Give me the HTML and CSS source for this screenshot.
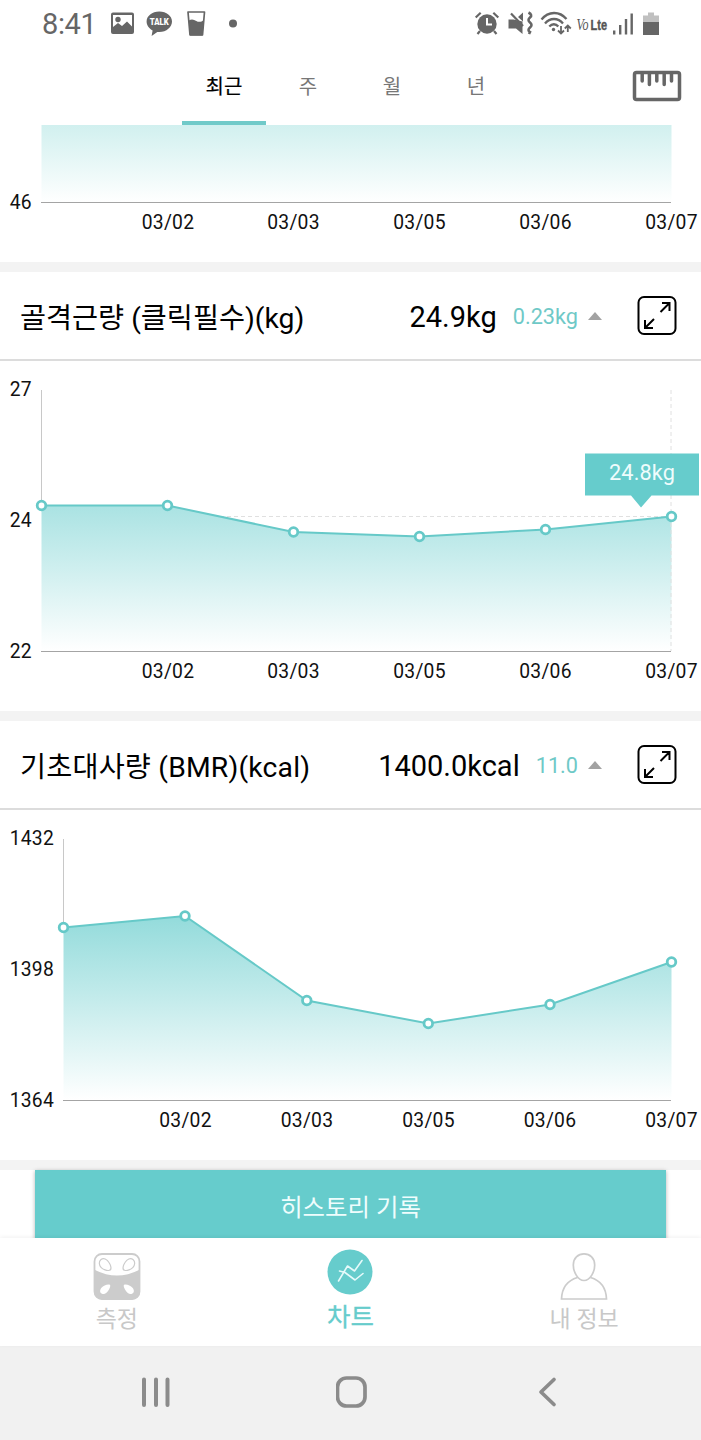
FILE: index.html
```html
<!DOCTYPE html>
<html lang="ko">
<head>
<meta charset="utf-8">
<title>차트</title>
<link rel="stylesheet" href="styles.css">
</head>
<body>
<svg class="defs" width="0" height="0" aria-hidden="true">
  <defs>
    <linearGradient id="fade" gradientUnits="userSpaceOnUse" x1="0" y1="29" x2="0" y2="290">
      <stop offset="0" stop-color="#66cccc"/>
      <stop offset="1" stop-color="#66cccc" stop-opacity="0"/>
    </linearGradient>
    <linearGradient id="tail" x1="0" y1="0" x2="0" y2="1">
      <stop offset="0" stop-color="#d1f0ef"/>
      <stop offset="1" stop-color="#ffffff"/>
    </linearGradient>
    <symbol id="expand" viewBox="0 0 40 40">
      <rect x="1.500" y="1" width="37" height="37" rx="5.500" fill="none" stroke="#000" stroke-width="2"/>
      <path d="M23.500 16 32.500 7M25 7h7.500v8M17 23 8 32M8 24v8h8" fill="none" stroke="#000" stroke-width="2"/>
    </symbol>
  </defs>
</svg>
<div class="phone">
  <header class="status">
    <span class="clock">8:41</span>
    <svg class="notif" width="146" height="48" viewBox="106 0 146 48">
      <path fill="#666" fill-rule="evenodd" d="M113 12.500h19a2 2 0 0 1 2 2v17.500a2 2 0 0 1-2 2h-19a2 2 0 0 1-2-2v-17.500a2 2 0 0 1 2-2ZM113 15v12l5-4 4 3 5-4.500 5 5V15Z"/>
      <circle cx="118" cy="19.500" r="2.700" fill="#666"/>
      <path fill="#666" d="M159.300 11.500c7.200 0 12.700 4.500 12.700 10s-5.500 10.500-12.700 10.500l-2-.1-5.700 4.100 1-5.500c-3.500-2-6-5-6-9 0-5.500 5.500-10 12.700-10Z"/>
      <text class="talk" x="159.300" y="25.300" text-anchor="middle" textLength="19" lengthAdjust="spacingAndGlyphs">TALK</text>
      <path d="M188 12h16.500l-2 23h-12.500Z" fill="none" stroke="#666" stroke-width="1.700" stroke-linejoin="round"/>
      <path d="M188.800 20.500c3-2 5-1 7.500.5s5 1 7.700-1l-1.400 15.500h-12.500Z" fill="#666"/>
      <circle cx="233" cy="23.500" r="4" fill="#666"/>
    </svg>
    <svg class="system" width="190" height="48" viewBox="472 0 190 48">
      <circle cx="487" cy="24" r="9.700" fill="#666"/>
      <path d="M487 18v6.500h5" fill="none" stroke="#fff" stroke-width="2"/>
      <path d="M475.700 17.500l5-4.700M498.300 17.500l-5-4.700M480 31l-2.500 3M494 31l2.500 3" fill="none" stroke="#666" stroke-width="2.200"/>
      <path d="M508.500 19.500h5l9 2V34l-6.500-5.500h-7.500ZM518 17l5-4.500v9Z" fill="#666"/>
      <path d="M511 13.500 523 26" stroke="#666" stroke-width="2.200"/>
      <path d="M528.500 12.500q4.500 2.500 1.500 5t0 5 0 5 0 4.500l-1 2" fill="none" stroke="#666" stroke-width="2.600"/>
      <path d="M541.500 19.500c7-8.600 18-8.600 25-.5M545 23.500c5-6 13-6 18 0M549.300 26.500c2.700-3 6.500-3 9 0" fill="none" stroke="#666" stroke-width="2.300"/>
      <circle cx="553.500" cy="29.500" r="1.700" fill="#666"/>
      <path d="M561 26v7M558 30.500l3 3 3-3M567.800 32v-6M564.800 28.500l3-3 3 3" fill="none" stroke="#666" stroke-width="1.800"/>
      <text class="vo" x="576.500" y="30" textLength="12" lengthAdjust="spacingAndGlyphs">Vo</text>
      <text class="lte" x="590.500" y="30" textLength="16.500" lengthAdjust="spacingAndGlyphs">Lte</text>
      <path d="M614.200 30.500v4M620.200 25v9.500M626 19v15.500M631.700 13.500v21" stroke="#666" stroke-width="2.400"/>
      <path d="M648 12.500h6v3h5v6.500h-16v-6.500h5Z" fill="#c0c0c0"/>
      <path d="M643 22h16v13h-16Z" fill="#666"/>
    </svg>
  </header>

  <nav class="tabs">
    <a class="tab active">최근</a>
    <a class="tab">주</a>
    <a class="tab">월</a>
    <a class="tab">년</a>
    <svg class="ruler" width="50" height="32" viewBox="0 0 50 32">
      <rect x="2.500" y="2.500" width="45" height="27" rx="2" fill="none" stroke="#666" stroke-width="3.500"/>
      <path d="M10.200 3v8M17.400 3v11.500M24.800 3v8M32.200 3v11.500M39.500 3v8" stroke="#666" stroke-width="3.500" stroke-linecap="round"/>
    </svg>
  </nav>

  <main>
    <section class="card">
      <svg class="chart" width="701" height="137" viewBox="0 0 701 137">
        <rect x="41.500" y="0" width="630" height="77.500" fill="url(#tail)"/>
        <path class="axis" d="M41 77.500h630"/>
        <text x="9.700" y="84">46</text>
        <g text-anchor="middle"><text x="168" y="104">03/02</text><text x="293.500" y="104">03/03</text><text x="419.500" y="104">03/05</text><text x="545.500" y="104">03/06</text><text x="671.500" y="104">03/07</text></g>
      </svg>
    </section>

    <section class="card">
      <div class="head">
        <h2>골격근량 (클릭필수)(kg)</h2>
        <span class="value">24.9kg</span>
        <span class="delta">0.23kg</span>
        <i class="up"></i>
        <svg class="expand" width="40" height="40"><use href="#expand"/></svg>
      </div>
      <svg class="chart" width="701" height="350" viewBox="0 0 701 350">
        <path class="yaxis" d="M41.500 29v115"/>
        <path d="M41.500 144.500H167.500L293.500 171 419.500 175.500 545.500 168.500 671.500 155.500V290H41.500Z" fill="url(#fade)"/>
        <path class="guide" d="M220 155.500H671.500M671 29V290"/>
        <path class="axis" d="M41 290.500h630"/>
        <path class="line" d="M41.500 144.500H167.500L293.500 171 419.500 175.500 545.500 168.500 671.500 155.500"/>
        <g class="dots"><circle cx="41.500" cy="144.500" r="4.300"/><circle cx="167.500" cy="144.500" r="4.300"/><circle cx="293.500" cy="171" r="4.300"/><circle cx="419.500" cy="175.500" r="4.300"/><circle cx="545.500" cy="168.500" r="4.300"/><circle cx="671.500" cy="155.500" r="4.300"/></g>
        <path d="M585 92.500H699V134.500H651.500L641 146.500 631 134.500H585Z" fill="#66cccc"/>
        <text class="tip" x="642" y="119" text-anchor="middle">24.8kg</text>
        <text x="9.700" y="35">27</text><text x="9.700" y="166">24</text><text x="9.700" y="297">22</text>
        <g text-anchor="middle"><text x="168" y="317">03/02</text><text x="293.500" y="317">03/03</text><text x="419.500" y="317">03/05</text><text x="545.500" y="317">03/06</text><text x="671.500" y="317">03/07</text></g>
      </svg>
    </section>

    <section class="card">
      <div class="head">
        <h2 class="wide">기초대사량 (BMR)(kcal)</h2>
        <span class="value">1400.0kcal</span>
        <span class="delta">11.0</span>
        <i class="up"></i>
        <svg class="expand" width="40" height="40"><use href="#expand"/></svg>
      </div>
      <svg class="chart" width="701" height="350" viewBox="0 0 701 350">
        <path class="yaxis" d="M63.500 29v88"/>
        <path d="M63.500 117.500 185 106 306.800 190.500 428.300 213.500 550 194.500 671.500 152V290H63.500Z" fill="url(#fade)"/>
        <path class="axis" d="M63 290.500h608"/>
        <path class="line" d="M63.500 117.500 185 106 306.800 190.500 428.300 213.500 550 194.500 671.500 152"/>
        <g class="dots"><circle cx="63.500" cy="117.500" r="4.300"/><circle cx="185" cy="106" r="4.300"/><circle cx="306.800" cy="190.500" r="4.300"/><circle cx="428.300" cy="213.500" r="4.300"/><circle cx="550" cy="194.500" r="4.300"/><circle cx="671.500" cy="152" r="4.300"/></g>
        <text x="9.700" y="35">1432</text><text x="9.700" y="166">1398</text><text x="9.700" y="297">1364</text>
        <g text-anchor="middle"><text x="185.500" y="317">03/02</text><text x="307" y="317">03/03</text><text x="428.500" y="317">03/05</text><text x="550" y="317">03/06</text><text x="671.500" y="317">03/07</text></g>
      </svg>
    </section>

    <div class="history"><button class="record">히스토리 기록</button></div>
  </main>

  <nav class="bottom">
    <a class="item">
      <svg width="48" height="48" viewBox="0 0 48 48">
        <rect x="1.500" y="1" width="45" height="45" rx="7.500" fill="#fff" stroke="#ccc" stroke-width="1.800"/>
        <path d="M1 16.500q23 12 46 0v22a8 8 0 0 1-8 8H9a8 8 0 0 1-8-8Z" fill="#ccc"/>
        <path d="M8 6.500c2.500-2 6-.5 8 3 2 3 3 7 .5 7.800s-6.500-.8-8.500-3-2.500-5.800 0-7.800ZM40 6.500c-2.500-2-6-.5-8 3-2 3-3 7-.5 7.800s6.500-.8 8.500-3 2.500-5.800 0-7.800Z" fill="#fff" stroke="#ccc" stroke-width="1.200"/>
        <path d="M16.300 31.500c1.500.5 1.300 2-.3 5s-4.500 5.300-7 4.200-2.300-4-.5-6 5-3.500 7.800-3.200ZM31.700 31.500c-1.500.5-1.300 2 .3 5s4.500 5.300 7 4.200 2.300-4 .5-6-5-3.500-7.800-3.200Z" fill="#fff"/>
      </svg>
      <span>측정</span>
    </a>
    <a class="item on">
      <svg width="46" height="46" viewBox="0 0 46 46">
        <circle cx="23" cy="23" r="22.500" fill="#66cccc"/>
        <path d="M11.500 32 20.500 17 27.500 22 35 11.500M12.500 22l5.500 1.500 10 7.500 8-6.500" fill="none" stroke="#e6fafa" stroke-width="1.600" stroke-linecap="round" stroke-linejoin="round"/>
      </svg>
      <span>차트</span>
    </a>
    <a class="item">
      <svg width="48" height="48" viewBox="0 0 48 48">
        <path d="M17.500 24.500C9 27 2 33.500 1.500 46H46.500C46 33.500 39 27 30.500 24.500" fill="none" stroke="#ccc" stroke-width="1.700"/>
        <path d="M24 .9c6 0 10.700 4.500 10.700 11S30.500 27.500 24 27.500 13.300 18.400 13.300 11.900 18 .9 24 .9Z" fill="#fff" stroke="#ccc" stroke-width="1.700"/>
      </svg>
      <span>내 정보</span>
    </a>
  </nav>

  <footer class="softkeys">
    <svg width="32" height="32" viewBox="0 0 32 32"><path d="M4 3.500v25.500M16 3.500v25.500M27.500 3.500v25.500" stroke="#8b8b8b" stroke-width="4" stroke-linecap="round"/></svg>
    <svg width="32" height="32" viewBox="0 0 32 32"><rect x="1.500" y="2" width="27.500" height="28" rx="9" fill="none" stroke="#8b8b8b" stroke-width="3.700"/></svg>
    <svg width="32" height="32" viewBox="0 0 32 32"><path d="M22 3.500 9 16 22 28.500" fill="none" stroke="#8b8b8b" stroke-width="3.700" stroke-linecap="round" stroke-linejoin="round"/></svg>
  </footer>
</div>
</body>
</html>
```

FILE: styles.css
```css
* { box-sizing: border-box; }
body { margin: 0; background: #fff; font-family: Roboto, "Noto Sans CJK KR", sans-serif; color: #000; }
svg { display: block; flex: none; }
.defs { position: absolute; }
.phone { width: 701px; height: 1440px; display: flex; flex-direction: column; overflow: hidden; }
.status { height: 48px; display: flex; align-items: center; color: #666; padding: 0 39px 0 42px; }
.clock { font-size: 29px; line-height: 50px; width: 64px; letter-spacing: -.4px; }
.system { margin-left: auto; }
.talk { font: 900 8.500px Roboto, sans-serif; fill: #fff; }
.vo { font: italic 16px "Liberation Serif", serif; fill: #555; }
.lte { font: bold 14.500px "Liberation Sans", sans-serif; fill: #555; stroke: #555; stroke-width: .4; }
.tabs { height: 77px; display: flex; align-items: stretch; padding: 0 19px 0 182px; }
.tab { width: 84px; text-align: center; font-size: 20px; line-height: 79px; color: #777; }
.tab.active { color: #000; -webkit-text-stroke: .2px #000; border-bottom: 4px solid #70cac9; }
.ruler { margin: 22px 0 0 auto; }
main { display: flex; flex-direction: column; gap: 10px; height: 1113px; background: #f3f3f3; overflow: hidden; }
.card { background: #fff; }
.head { height: 89px; display: flex; align-items: center; padding: 0 24px 0 20px; border-bottom: 2px solid #dcdcdc; white-space: nowrap; }
h2 { margin: 0; padding-bottom: 1px; font-size: 28.300px; font-weight: 400; }
h2.wide { letter-spacing: .18px; }
.value { margin-left: auto; padding-top: 2px; font-size: 29px; }
.delta { margin-left: 16px; padding-top: 2px; font-size: 21.700px; color: #6fc9c7; }
.up { margin: 0 35px 0 10px; border: 7.500px solid transparent; border-top: 0; border-bottom: 8px solid #a2a2a2; }
.chart text { font-size: 19.300px; letter-spacing: .25px; fill: #111; }
.chart .tip { font-size: 21.700px; letter-spacing: .1px; fill: #effcfc; }
.axis { stroke: #a4a4a4; }
.yaxis { stroke: #c8c8c8; }
.guide { stroke: #e0e0e0; stroke-dasharray: 4 3; fill: none; }
.line { fill: none; stroke: #66c9c8; stroke-width: 2; }
.dots circle { fill: #fff; stroke: #66c9c8; stroke-width: 2.800; }
.history { background: #fff; padding: 0 35px; flex: none; }
.record { display: block; width: 631px; height: 78px; border: 0; padding: 0 0 7px; background: #66cccc; color: #effdfd; font: 24.400px Roboto, "Noto Sans CJK KR", sans-serif; box-shadow: 0 1px 4px rgba(0,0,0,.3); }
.bottom { height: 108px; flex: none; display: grid; grid-template-columns: repeat(3, 1fr); position: relative; background: #fff; box-shadow: 0 -1px 4px rgba(0,0,0,.06); }
.item { display: flex; flex-direction: column; align-items: center; padding-top: 15px; color: #c8c8c8; font-size: 23px; line-height: 37px; }
.item.on { padding-top: 11px; color: #66cccc; font-size: 25.500px; -webkit-text-stroke: .3px #66cccc; line-height: 45px; }
.softkeys { height: 94px; flex: none; background: #f1f1f1; display: flex; align-items: center; justify-content: space-between; padding: 0 137px 2px 140px; }
```
